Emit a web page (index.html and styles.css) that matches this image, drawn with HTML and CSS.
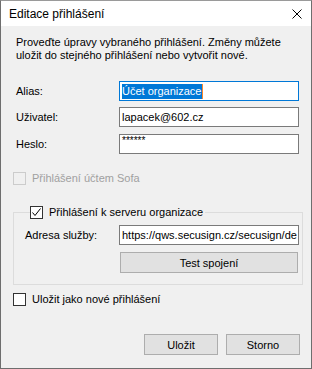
FILE: index.html
```html
<!DOCTYPE html>
<html lang="cs">
<head>
  <meta charset="UTF-8">
  <title>Editace přihlášení</title>
  <link rel="stylesheet" href="styles.css">
</head>
<body>
  <div class="window">
    <div class="titlebar">
      <span class="title">Editace přihlášení</span>
      <svg class="close" width="10" height="10" viewBox="0 0 10 10">
        <path d="M0.5 0.5 L9.5 9.5 M9.5 0.5 L0.5 9.5" stroke="#000" stroke-width="1" fill="none"/>
      </svg>
    </div>

    <div class="content">
      <p class="desc">Proveďte úpravy vybraného přihlášení. Změny můžete uložit do stejného přihlášení nebo vytvořit nové.</p>

      <div class="form">
        <div class="row">
          <label>Alias:</label>
          <div class="field focused"><span class="selected">Účet organizace</span><span class="caret"></span></div>
        </div>
        <div class="row">
          <label>Uživatel:</label>
          <div class="field">lapacek@602.cz</div>
        </div>
        <div class="row pwd">
          <label>Heslo:</label>
          <div class="field stars">******</div>
        </div>
      </div>

      <div class="check disabled sofa">
        <span class="box"></span>
        <span>Přihlášení účtem Sofa</span>
      </div>

      <fieldset class="group">
        <legend class="check">
          <span class="box">
            <svg width="11" height="11" viewBox="0 0 11 11">
              <path d="M1.5 5.5 L4 8.5 L9.5 1.5" stroke="#000" stroke-width="1" fill="none"/>
            </svg>
          </span>
          <span>Přihlášení k serveru organizace</span>
        </legend>
        <div class="row">
          <label>Adresa služby:</label>
          <div class="field clip">https://qws.secusign.cz/secusign/de</div>
        </div>
        <button class="btn wide">Test spojení</button>
      </fieldset>

      <div class="check saveas">
        <span class="box"></span>
        <span>Uložit jako nové přihlášení</span>
      </div>

      <div class="actions">
        <button class="btn">Uložit</button>
        <button class="btn">Storno</button>
      </div>
    </div>
  </div>
</body>
</html>
```

FILE: styles.css
```css
* {
  box-sizing: border-box;
  margin: 0;
  padding: 0;
}

body {
  font-family: 'Liberation Sans', Arial, sans-serif;
  font-size: 11px;
  color: #000;
  background: #fff;
}

.window {
  width: 312px;
  height: 369px;
  border: 1px solid #6e6e6e;
  border-top-color: #9a9a9a;
  background: #f0f0f0;
  display: flex;
  flex-direction: column;
}

.titlebar {
  height: 25px;
  background: #fff;
  display: flex;
  align-items: center;
  justify-content: space-between;
  padding: 0 9px 0 8px;
}

.title {
  font-family: 'Liberation Sans', Arial, sans-serif;
  font-size: 12px;
}

.close {
  display: block;
  margin-top: 1px;
}

.content {
  padding: 10px 8px 0 12px;
}

.desc {
  line-height: 13px;
  padding-left: 3px;
}

.form {
  margin-top: 19px;
  padding-left: 3px;
}

.row {
  display: grid;
  grid-template-columns: 103px 180px;
  align-items: center;
  height: 20px;
}

.row + .row {
  margin-top: 6px;
}

.row.pwd {
  margin-top: 7px;
}

.field {
  height: 20px;
  background: #fff;
  border: 1px solid #7a7a7a;
  padding: 0 2px;
  line-height: 18px;
  white-space: nowrap;
  display: flex;
  align-items: center;
}

.field.focused {
  border-color: #0078d7;
}

.selected {
  background: #0078d7;
  color: #fff;
  line-height: 15px;
}

.caret {
  width: 1px;
  height: 15px;
  background: #ff8728;
}

.stars {
  align-items: flex-start;
  line-height: 12px;
  font-size: 10px;
}

.clip {
  overflow: hidden;
}

.check {
  display: flex;
  align-items: center;
  gap: 6px;
  height: 13px;
  line-height: 13px;
}

.box {
  width: 13px;
  height: 13px;
  border: 1px solid #333;
  background: #fff;
  display: flex;
  align-items: center;
  justify-content: center;
}

.disabled {
  color: #a0a0a0;
}

.disabled .box {
  border-color: #cccccc;
  background: #f0f0f0;
}

.sofa {
  margin-top: 18px;
}

.group {
  margin-top: 21px;
  border: 1px solid #dcdcdc;
  padding: 6px 3px 11px 11px;
}

.group legend {
  margin-left: 5px;
  padding-right: 2px;
}

.group .row {
  grid-template-columns: 94px 180px;
  height: 20px;
}

.btn {
  font-family: inherit;
  font-size: 11px;
  color: #000;
  background: #e1e1e1;
  border: 1px solid #adadad;
  height: 21px;
  width: 74px;
}

.btn.wide {
  display: block;
  width: 178px;
  margin: 7px 0 0 95px;
}

.saveas {
  margin-top: 8px;
}

.actions {
  display: flex;
  justify-content: flex-end;
  gap: 8px;
  margin-top: 28px;
  padding-right: 3px;
}
```
